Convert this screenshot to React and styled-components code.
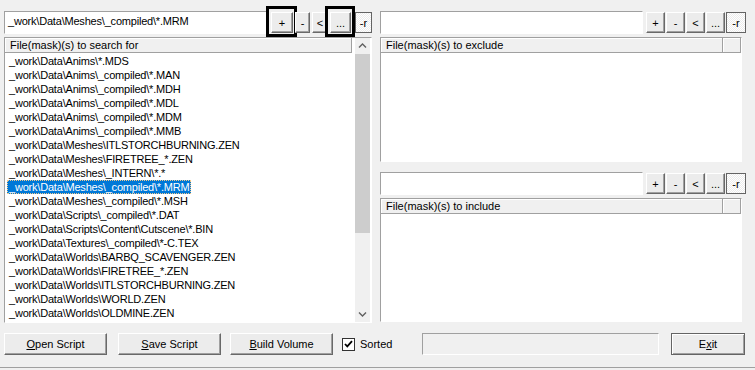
import React from "react";
import styled, { createGlobalStyle } from "styled-components";

const GlobalStyle = createGlobalStyle`
  html, body {
    margin: 0;
    padding: 0;
    background: #f0f0f0;
  }
  body {
    font-family: "Liberation Sans", Arial, sans-serif;
    font-size: 11px;
    color: #000;
  }
`;

const searchItems = [
  "_work\\Data\\Anims\\*.MDS",
  "_work\\Data\\Anims\\_compiled\\*.MAN",
  "_work\\Data\\Anims\\_compiled\\*.MDH",
  "_work\\Data\\Anims\\_compiled\\*.MDL",
  "_work\\Data\\Anims\\_compiled\\*.MDM",
  "_work\\Data\\Anims\\_compiled\\*.MMB",
  "_work\\Data\\Meshes\\ITLSTORCHBURNING.ZEN",
  "_work\\Data\\Meshes\\FIRETREE_*.ZEN",
  "_work\\Data\\Meshes\\_INTERN\\*.*",
  "_work\\Data\\Meshes\\_compiled\\*.MRM",
  "_work\\Data\\Meshes\\_compiled\\*.MSH",
  "_work\\Data\\Scripts\\_compiled\\*.DAT",
  "_work\\Data\\Scripts\\Content\\Cutscene\\*.BIN",
  "_work\\Data\\Textures\\_compiled\\*-C.TEX",
  "_work\\Data\\Worlds\\BARBQ_SCAVENGER.ZEN",
  "_work\\Data\\Worlds\\FIRETREE_*.ZEN",
  "_work\\Data\\Worlds\\ITLSTORCHBURNING.ZEN",
  "_work\\Data\\Worlds\\WORLD.ZEN",
  "_work\\Data\\Worlds\\OLDMINE.ZEN",
];

const leftButtons = [
  { label: "+", w: 22, gap: 3, marked: true },
  { label: "-", w: 15, gap: 2 },
  { label: "<", w: 16, gap: 2 },
  { label: "...", w: 21, gap: 2, marked: true },
  { label: "-r", w: 17, gap: 4, toggled: true },
];

const rightButtons = [
  { label: "+", w: 19, gap: 3 },
  { label: "-", w: 19, gap: 1 },
  { label: "<", w: 19, gap: 1 },
  { label: "...", w: 19, gap: 1 },
  { label: "-r", w: 20, gap: 1, toggled: true },
];

const Window = styled.div`
  width: 755px;
  height: 370px;
  display: flex;
  flex-direction: column;
  overflow: hidden;
`;

const Workspace = styled.div`
  display: grid;
  grid-template-columns: 368px 366px;
  column-gap: 8px;
  padding: 11px 9px 0 4px;
`;

const Column = styled.div`
  display: flex;
  flex-direction: column;
  gap: ${(p) => p.$gap || 0}px;
`;

const Panel = styled.div`
  display: flex;
  flex-direction: column;
  gap: 3px;
`;

const Toolbar = styled.div`
  display: flex;
  align-items: center;
  height: 23px;
`;

const PathField = styled.div`
  width: ${(p) => p.$w}px;
  height: 23px;
  box-sizing: border-box;
  padding: 2px 3px 0;
  line-height: 14px;
  letter-spacing: -0.2px;
  background: #fff;
  border: 1px solid;
  border-color: #a0a0a0 #fff #fff #a0a0a0;
  white-space: nowrap;
  overflow: hidden;
`;

const ToolButton = styled.button`
  position: relative;
  width: ${(p) => p.$w}px;
  height: 21px;
  margin: 0 0 0 ${(p) => p.$gap}px;
  padding: 0;
  box-sizing: border-box;
  font: inherit;
  font-size: 11px;
  line-height: 18px;
  color: #000;
  background: ${(p) =>
    p.$toggled
      ? "repeating-conic-gradient(#ffffff 0 25%, #ececec 0 50%) 0 0 / 2px 2px"
      : "#ececec"};
  border: 1px solid;
  border-color: ${(p) =>
    p.$toggled ? "#646464" : "#ffffff #696969 #696969 #ffffff"};
  box-shadow: ${(p) => (p.$toggled ? "none" : "inset -1px -1px 0 #a0a0a0")};

  &::after {
    content: "";
    display: ${(p) => (p.$marked ? "block" : "none")};
    position: absolute;
    top: -7px;
    bottom: -5px;
    left: -6px;
    right: -5px;
    border: 3px solid #000;
  }
`;

const ListBox = styled.div`
  height: ${(p) => p.$h}px;
  margin-right: ${(p) => p.$mr || 0}px;
  box-sizing: border-box;
  display: flex;
  background: #fff;
  border: 1px solid;
  border-color: #a0a0a0 #fff #fff #a0a0a0;
  overflow: hidden;
`;

const ListMain = styled.div`
  flex: 1;
  display: flex;
  flex-direction: column;
  min-width: 0;
`;

const HeaderRow = styled.div`
  display: flex;
  height: 15px;
  padding-right: ${(p) => p.$pr || 0}px;
`;

const HeaderCell = styled.div`
  flex: ${(p) => (p.$w ? `0 0 ${p.$w}px` : 1)};
  box-sizing: border-box;
  padding-left: 5px;
  line-height: 14px;
  background: #f0f0f0;
  border-right: 1px solid #a0a0a0;
  border-bottom: 1px solid #a0a0a0;
  box-shadow: inset 1px 1px 0 #fff;
  white-space: nowrap;
`;

const Rows = styled.div`
  display: flex;
  flex-direction: column;
  align-items: flex-start;
  padding: 1px 0 0 2px;
`;

const Row = styled.div`
  height: 14px;
  line-height: 14px;
  padding: 0 2px;
  box-sizing: border-box;
  letter-spacing: -0.2px;
  white-space: nowrap;
  color: ${(p) => (p.$selected ? "#fff" : "#000")};
  background: ${(p) => (p.$selected ? "#0078d7" : "transparent")};
  outline: ${(p) => (p.$selected ? "1px dotted #f3c98b" : "none")};
  outline-offset: -1px;
`;

const ScrollBar = styled.div`
  width: 15px;
  margin-right: 1px;
  display: flex;
  flex-direction: column;
  background: #f0f0f0;
`;

const ScrollArrow = styled.div`
  height: 16px;
  display: flex;
  align-items: center;
  justify-content: center;
`;

const ScrollThumb = styled.div`
  height: 179px;
  background: #cdcdcd;
`;

const ScrollTrack = styled.div`
  flex: 1;
`;

const BottomBar = styled.div`
  display: flex;
  align-items: center;
  padding: 10px 10px 0 4px;
`;

const PushButton = styled.button`
  width: ${(p) => p.$w}px;
  height: 22px;
  margin: 0 0 0 ${(p) => p.$gap || 0}px;
  padding: 0;
  box-sizing: border-box;
  font: inherit;
  font-size: 11px;
  color: #000;
  background: #ececec;
  border: 1px solid;
  border-color: ${(p) =>
    p.$default ? "#646464" : "#ffffff #696969 #696969 #ffffff"};
  box-shadow: ${(p) =>
    p.$default
      ? "inset 1px 1px 0 #fff, inset -1px -1px 0 #a0a0a0"
      : "inset -1px -1px 0 #a0a0a0"};
`;

const CheckRow = styled.label`
  display: flex;
  align-items: center;
  margin-left: 9px;
  gap: 5px;
`;

const CheckBox = styled.span`
  width: 13px;
  height: 13px;
  box-sizing: border-box;
  display: flex;
  align-items: center;
  justify-content: center;
  background: #fff;
  border: 1px solid #333;
`;

const ProgressBox = styled.div`
  width: 237px;
  height: 22px;
  margin-left: auto;
  box-sizing: border-box;
  border: 1px solid;
  border-color: #a0a0a0 #fff #fff #a0a0a0;
`;

const StatusLine = styled.div`
  margin-top: auto;
  height: 2px;
  border-top: 1px solid #a0a0a0;
`;

const Chevron = ({ down }) => (
  <svg width="9" height="6" viewBox="0 0 9 6">
    <polyline
      points={down ? "1,1.5 4.5,5 8,1.5" : "1,4.5 4.5,1 8,4.5"}
      fill="none"
      stroke="#606060"
      strokeWidth="1.4"
    />
  </svg>
);

const ToolRow = ({ fieldWidth, value, buttons }) => (
  <Toolbar>
    <PathField $w={fieldWidth}>{value}</PathField>
    {buttons.map((b) => (
      <ToolButton
        key={b.label}
        $w={b.w}
        $gap={b.gap}
        $marked={b.marked}
        $toggled={b.toggled}
      >
        {b.label}
      </ToolButton>
    ))}
  </Toolbar>
);

const MaskList = ({ title, height }) => (
  <ListBox $h={height} $mr={4}>
    <ListMain>
      <HeaderRow>
        <HeaderCell>{title}</HeaderCell>
        <HeaderCell $w={18} />
      </HeaderRow>
    </ListMain>
  </ListBox>
);

const App = () => {
  return (
    <Window>
      <GlobalStyle />
      <Workspace>
        <Column $gap={3}>
          <ToolRow
            fieldWidth={264}
            value="_work\Data\Meshes\_compiled\*.MRM"
            buttons={leftButtons}
          />
          <ListBox $h={286}>
            <ListMain>
              <HeaderRow $pr={3}>
                <HeaderCell>File(mask)(s) to search for</HeaderCell>
              </HeaderRow>
              <Rows>
                {searchItems.map((item, i) => (
                  <Row key={item + i} $selected={i === 9}>
                    {item}
                  </Row>
                ))}
              </Rows>
            </ListMain>
            <ScrollBar>
              <ScrollArrow>
                <Chevron />
              </ScrollArrow>
              <ScrollThumb />
              <ScrollTrack />
              <ScrollArrow>
                <Chevron down />
              </ScrollArrow>
            </ScrollBar>
          </ListBox>
        </Column>

        <Column $gap={10}>
          <Panel>
            <ToolRow fieldWidth={263} value="" buttons={rightButtons} />
            <MaskList title="File(mask)(s) to exclude" height={125} />
          </Panel>
          <Panel>
            <ToolRow fieldWidth={263} value="" buttons={rightButtons} />
            <MaskList title="File(mask)(s) to include" height={124} />
          </Panel>
        </Column>
      </Workspace>

      <BottomBar>
        <PushButton $w={103}>
          <u>O</u>pen Script
        </PushButton>
        <PushButton $w={103} $gap={11}>
          <u>S</u>ave Script
        </PushButton>
        <PushButton $w={103} $gap={9}>
          <u>B</u>uild Volume
        </PushButton>
        <CheckRow>
          <CheckBox>
            <svg width="9" height="8" viewBox="0 0 9 8">
              <polyline
                points="1,4 3.3,6.4 8,1.2"
                fill="none"
                stroke="#000"
                strokeWidth="1.8"
              />
            </svg>
          </CheckBox>
          Sorted
        </CheckRow>
        <ProgressBox />
        <PushButton $w={74} $gap={12} $default>
          E<u>x</u>it
        </PushButton>
      </BottomBar>
      <StatusLine />
    </Window>
  );
};

export default App;
